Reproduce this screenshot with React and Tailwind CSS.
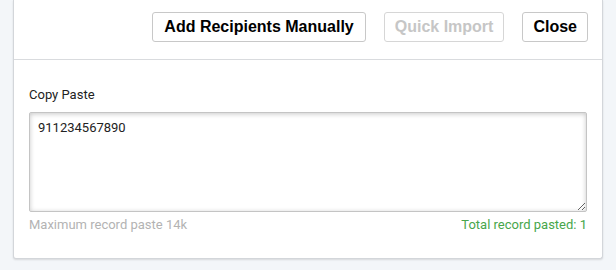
import React, { useState } from 'react';

export default function App() {
  const [text, setText] = useState('911234567890');
  const count = text.split('\n').filter((l) => l.trim() !== '').length;

  return (
    <div className="min-h-[270px] bg-[#f3f6f9] px-[13px] pb-[12px]">
      <div className="bg-white border border-t-0 border-[#d3d6da] rounded-b-[3px] shadow-[0_1px_2px_rgba(0,0,0,0.12)]">
        {/* Header */}
        <div className="h-[60px] flex items-start justify-end gap-[18px] pt-[12px] pr-[14px] border-b border-[#d9dbde] font-['Liberation_Sans',Arial,sans-serif]">
          <button className="h-[30px] px-[11px] border border-[#c8c8c8] rounded-[3px] bg-white text-[16px] font-bold text-black">
            Add Recipients Manually
          </button>
          <button
            disabled
            className="h-[30px] px-[10px] border border-[#d6d6d6] rounded-[3px] bg-white text-[16px] font-bold text-[#c6c6c6]"
          >
            Quick Import
          </button>
          <button className="h-[30px] px-[10px] border border-[#c8c8c8] rounded-[3px] bg-white text-[16px] font-bold text-black">
            Close
          </button>
        </div>

        {/* Body */}
        <div className="px-[15px] pt-[26px] pb-[25px] font-['Roboto',sans-serif]">
          <label className="block text-[13px] leading-[18px] text-[#222] mb-[8px]">Copy Paste</label>
          <textarea
            value={text}
            onChange={(e) => setText(e.target.value)}
            className="block w-full h-[100px] px-[8px] py-[6px] text-[13px] leading-[18px] text-[#222] border border-[#c4c4c4] rounded-[2px] shadow-[inset_0_1px_5px_rgba(0,0,0,0.22)] outline-none font-['Roboto',sans-serif]"
          />
          <div className="flex justify-between mt-[5px] text-[13px] leading-[16px]">
            <span className="text-[#b3b3b3]">Maximum record paste 14k</span>
            <span className="text-[#47a64b]">Total record pasted: {count}</span>
          </div>
        </div>
      </div>
    </div>
  );
}
